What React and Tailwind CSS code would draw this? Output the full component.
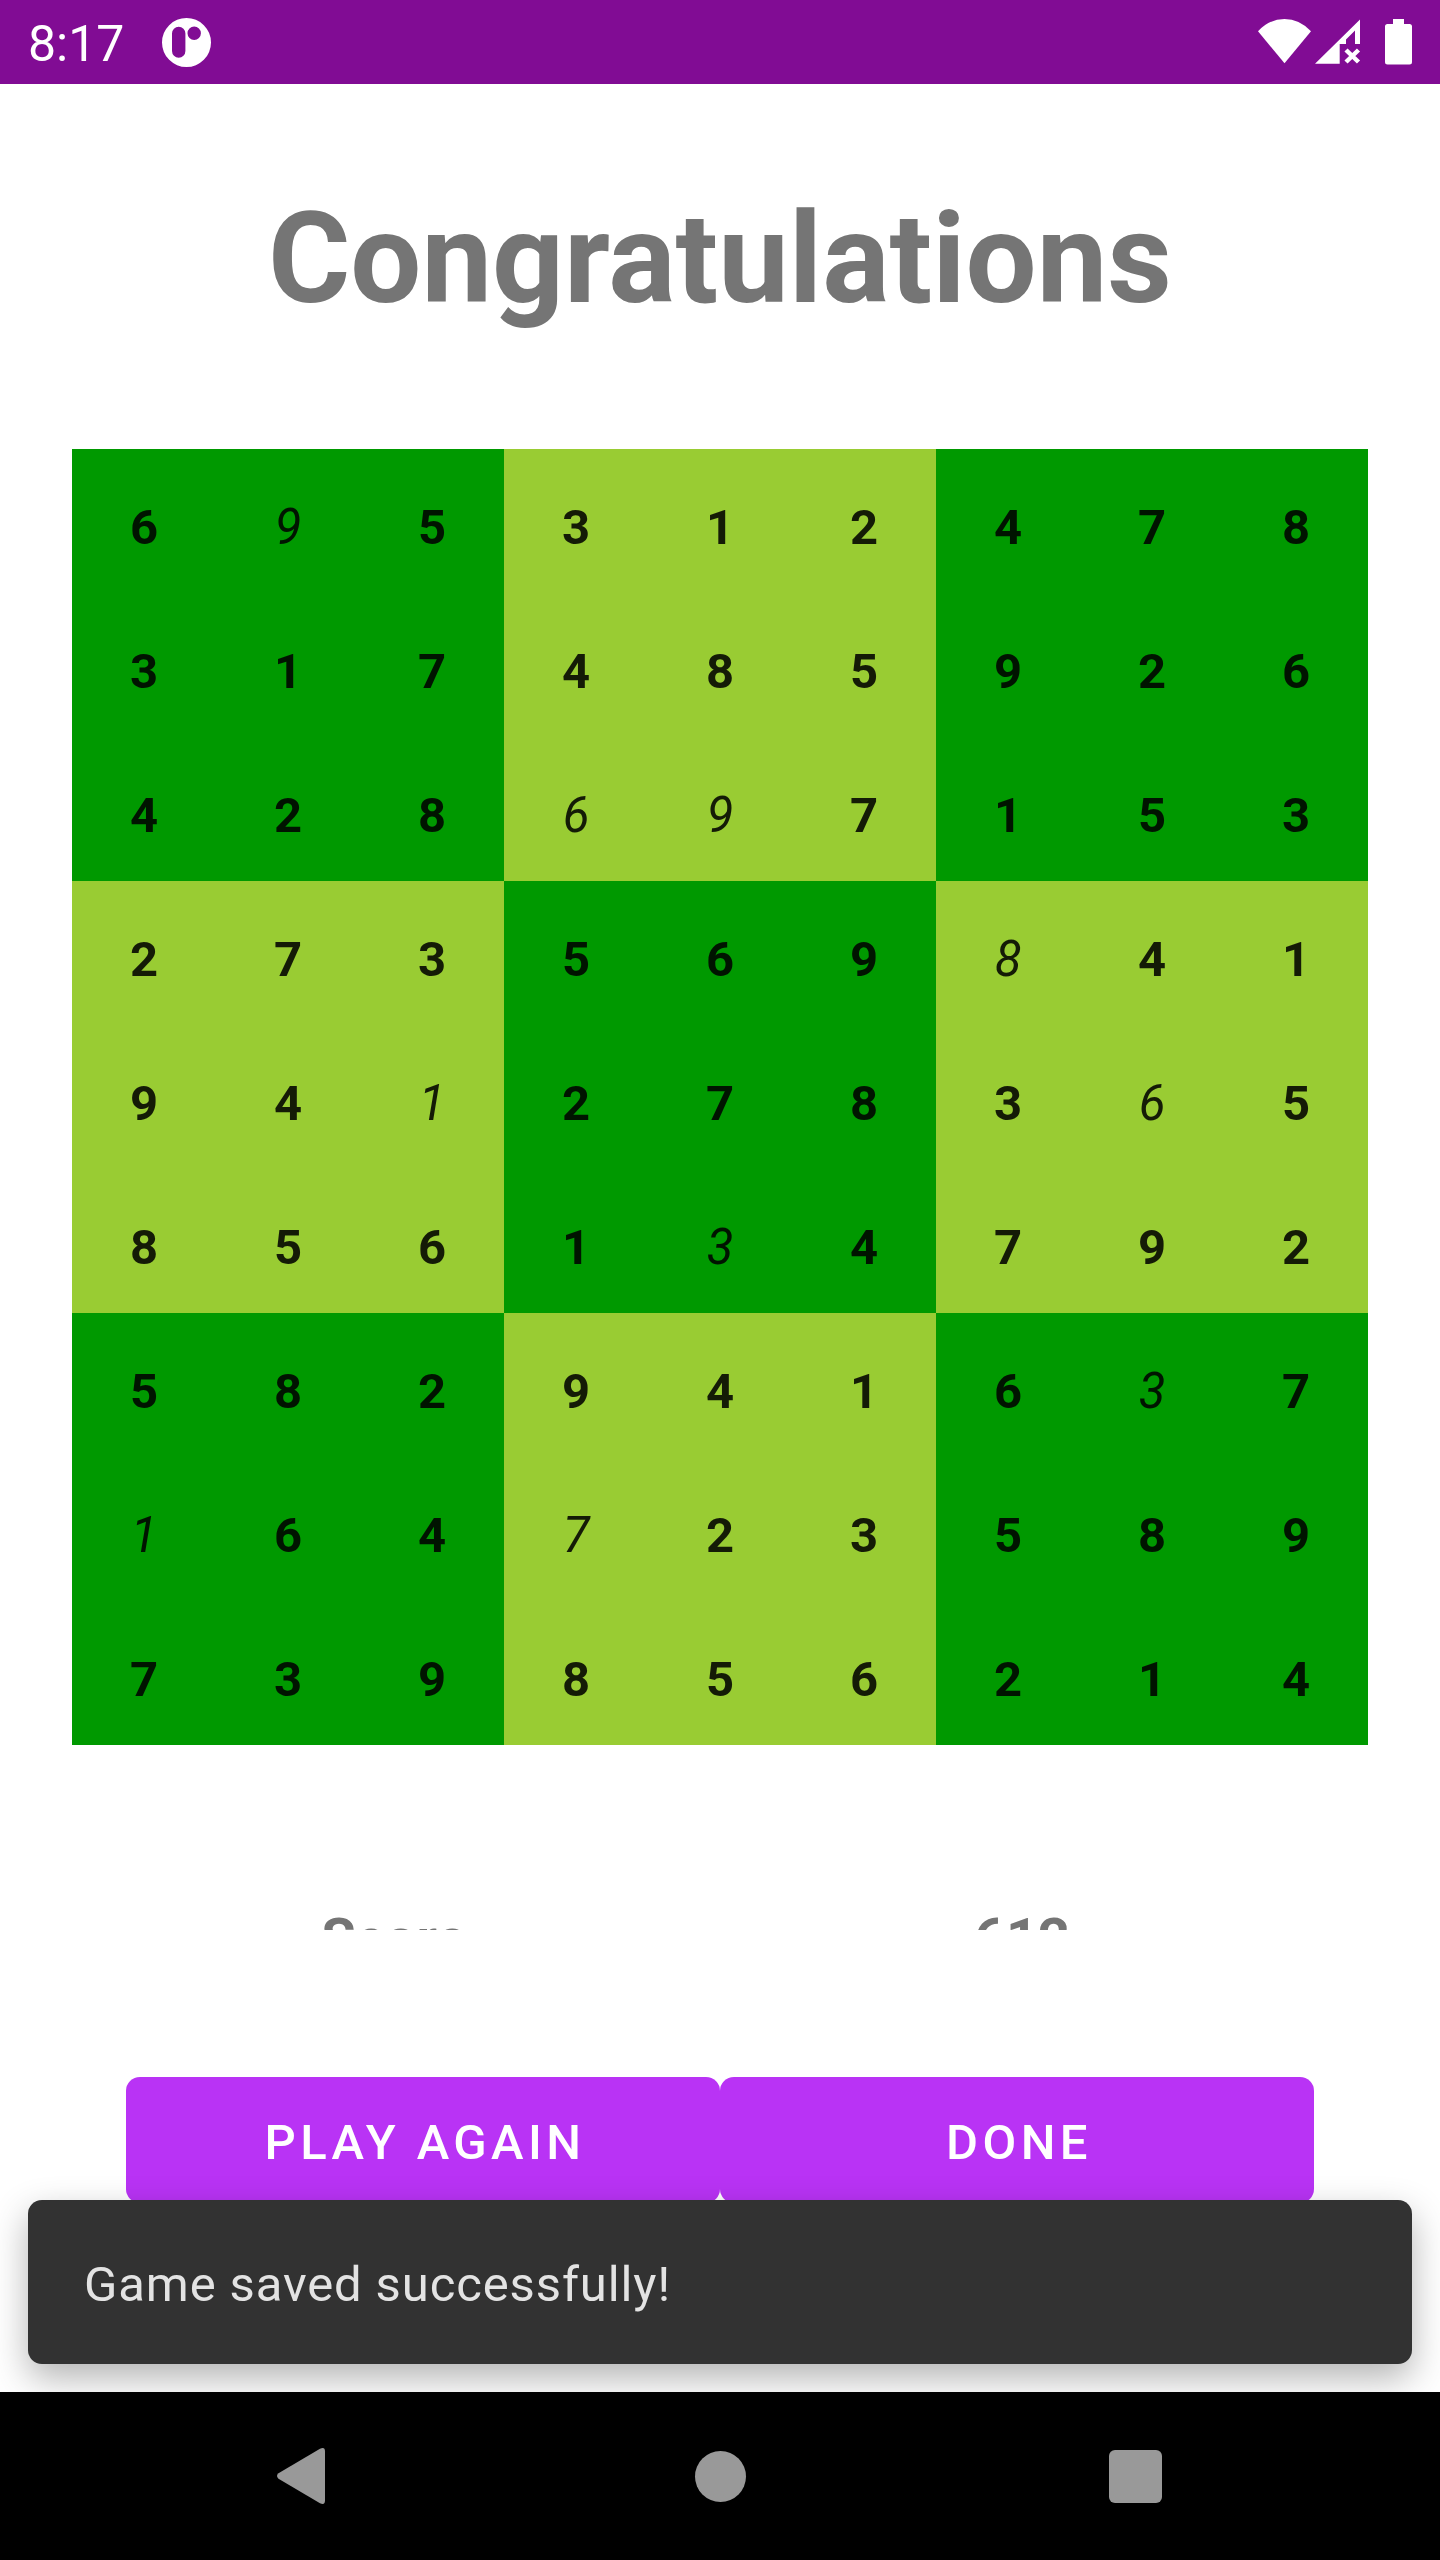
const BOARD = [
  '695312478',
  '317485926',
  '428697153',
  '273569841',
  '941278365',
  '856134792',
  '582941637',
  '164723589',
  '739856214',
];

// Cells the player filled in, as row-column.
const FILLED = new Set(['0-1', '2-3', '2-4', '3-6', '4-2', '4-7', '5-4', '6-7', '7-0', '7-3']);

function StatusBar() {
  return (
    <header className="flex h-[84px] shrink-0 items-center justify-between bg-[#810c94] px-7 text-white">
      <div className="flex items-center gap-[38px]">
        <span className="pt-1 text-[50px] leading-[80px]">8:17</span>
        <svg viewBox="0 0 49 49" className="size-[49px]" aria-hidden="true">
          <path
            fill="currentColor"
            fillRule="evenodd"
            d="M24.500 0a24.500 24.500 0 1 1 0 49a24.500 24.500 0 1 1 0-49zM10 15.500v17.500a6.700 6.700 0 0 0 13.400 0v-17.500a6.700 6.700 0 0 0-13.400 0zM32.200 8.600a6.700 6.700 0 1 0 0 13.400a6.700 6.700 0 1 0 0-13.400z"
          />
        </svg>
      </div>
      <svg viewBox="0 0 154 46" className="h-[46px] w-[154px]" fill="currentColor" aria-hidden="true">
        <path d="M0 12.300Q11.500 0 26.500 0T53 12.300L26.500 44.300z" />
        <path d="M57 44.700L102 .5V25H97V11.500L88 20.500V25H81.700V44.700z" />
        <path d="M88 31L100.500 43M100.500 31L88 43" stroke="currentColor" strokeWidth="4.500" />
        <path d="M135 0h11v5h5.500q2.500 0 2.500 2.500v35.500q0 2.500-2.500 2.500h-22q-2.500 0-2.500-2.500V7.500q0-2.500 2.500-2.500h5.500z" />
      </svg>
    </header>
  );
}

function Board() {
  return (
    <table className="w-full table-fixed border-collapse text-center text-[49px] leading-none text-black/87">
      <tbody>
        {BOARD.map((row, r) => (
          <tr key={r}>
            {row.split('').map((digit, c) => {
              const dark = (Math.floor(r / 3) + Math.floor(c / 3)) % 2 === 0;
              const filled = FILLED.has(`${r}-${c}`);
              return (
                <td
                  key={c}
                  className={`h-[144px] p-0 pt-3 align-middle ${dark ? 'bg-[#009900]' : 'bg-[#99cc33]'} ${
                    filled ? 'font-normal italic' : 'font-bold'
                  }`}
                >
                  {digit}
                </td>
              );
            })}
          </tr>
        ))}
      </tbody>
    </table>
  );
}

function ActionButton({ children }) {
  return (
    <button
      type="button"
      className="h-[126px] flex-1 rounded-[14px] bg-[#b933f5] pt-1.5 pl-1 text-[49px] font-medium tracking-[0.09em] text-white uppercase"
    >
      {children}
    </button>
  );
}

function NavBar() {
  return (
    <nav className="flex h-[168px] shrink-0 items-center justify-between bg-black px-[253px] text-[#999999]">
      <button type="button" aria-label="Back" className="flex w-[104px] justify-center">
        <svg viewBox="0 0 56 56" className="size-14" fill="currentColor" aria-hidden="true">
          <path d="M1.500 25.300L43 .800Q48 -1.500 48 3.500V52.500Q48 57.500 43 55.200L1.500 30.700Q-1.500 28 1.500 25.300z" />
        </svg>
      </button>
      <button type="button" aria-label="Home" className="flex w-[104px] justify-center">
        <span className="size-[51px] rounded-full bg-[#999999]" />
      </button>
      <button type="button" aria-label="Overview" className="flex w-[104px] justify-center">
        <span className="size-[53px] rounded-[6px] bg-[#999999]" />
      </button>
    </nav>
  );
}

export default function App() {
  return (
    <div className="flex min-h-screen flex-col bg-white font-[Roboto,sans-serif]">
      <StatusBar />
      <main className="relative flex flex-1 flex-col overflow-hidden">
        <h1 className="pt-[101px] text-center text-[126px] leading-[148px] font-bold text-[#757575]">
          Congratulations
        </h1>
        <div className="px-[72px] pt-[116px]">
          <Board />
        </div>
        <dl className="mt-[161px] mr-[104px] ml-[80px] flex h-[24px] overflow-hidden text-center text-[56px] leading-[66px] font-bold text-[#757575]">
          <dt className="flex-1">Score</dt>
          <dd className="flex-1">612</dd>
        </dl>
        <div className="mx-[126px] mt-[147px] flex">
          <ActionButton>Play again</ActionButton>
          <ActionButton>Done</ActionButton>
        </div>
        <div
          role="status"
          className="absolute inset-x-7 bottom-7 flex h-[164px] items-center rounded-[14px] bg-[#323232] px-14 pt-1.5 text-[49px] tracking-[0.018em] text-[#e3e3e3] shadow-[0_14px_36px_rgba(0,0,0,0.3)]"
        >
          Game saved successfully!
        </div>
      </main>
      <NavBar />
    </div>
  );
}
